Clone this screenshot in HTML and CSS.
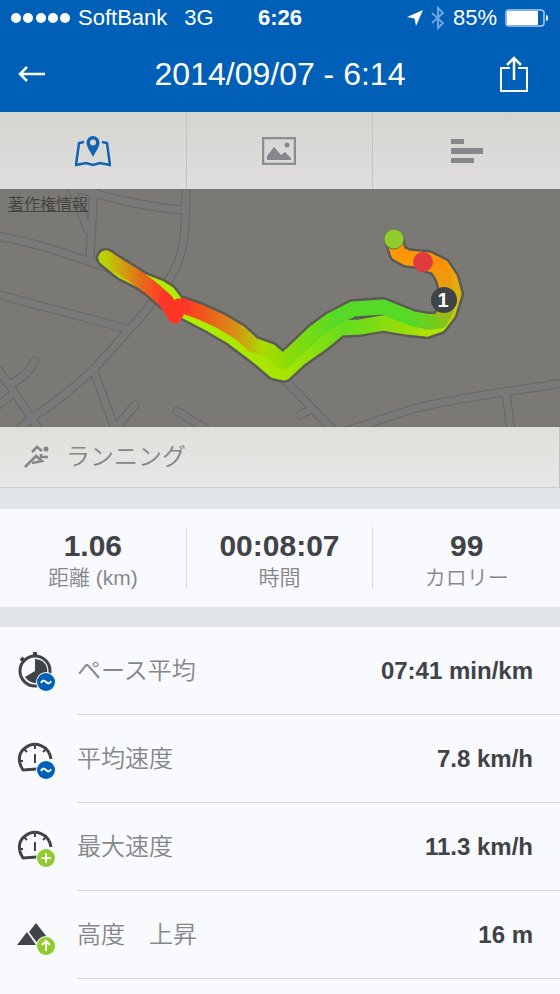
FILE: index.html
```html
<!DOCTYPE html>
<html lang="ja">
  <head>
    <meta charset="UTF-8" />
    <meta name="viewport" content="width=device-width, initial-scale=1.0" />
    <title>2014/09/07 - 6:14</title>
    <link rel="stylesheet" href="styles.css">
  </head>
  <body>
    <header class="header">
      <div class="status-bar">
        <div class="carrier">
          <svg width="60" height="12" viewBox="0 0 60 12" fill="#fff">
            <circle cx="5" cy="6" r="5" />
            <circle cx="17" cy="6" r="5" />
            <circle cx="30" cy="6" r="5" />
            <circle cx="42" cy="6" r="5" />
            <circle cx="54" cy="6" r="5" />
          </svg>
          <span>SoftBank</span>
          <span class="network">3G</span>
        </div>
        <time class="clock">6:26</time>
        <div class="power">
          <svg width="16" height="16" viewBox="0 0 16 16" fill="#fff">
            <path d="M16 0L9 16L7.500 8.500L0 7Z" />
          </svg>
          <svg width="14" height="24" viewBox="0 0 14 24" fill="none" stroke="#6fa5dc" stroke-width="2">
            <path d="M1 7L12 17L7 22V2L12 7L1 17" />
          </svg>
          <span>85%</span>
          <svg width="44" height="18" viewBox="0 0 44 18">
            <rect x="1" y="1" width="38" height="16" rx="3" fill="none" stroke="#a9cdf0" stroke-width="1.500" />
            <rect x="2" y="2" width="31" height="14" rx="1" fill="#fff" />
            <path d="M41 6Q43 6 43 9Q43 12 41 12Z" fill="#fff" />
          </svg>
        </div>
      </div>
      <div class="nav-bar">
        <button class="back-button" aria-label="戻る">
          <svg width="28" height="18" viewBox="0 0 28 18" fill="none" stroke="#fff" stroke-width="2.500">
            <path d="M27 9H2M9 2L2 9L9 16" />
          </svg>
        </button>
        <h1>2014/09/07 - 6:14</h1>
        <button class="share-button" aria-label="共有">
          <svg width="28" height="36" viewBox="0 0 28 36" fill="none" stroke="#fff" stroke-width="2">
            <path d="M10 12H1V35H27V12H18" />
            <path d="M14 24V2M7 9L14 2L21 9" stroke-width="2.500" />
          </svg>
        </button>
      </div>
    </header>

    <nav class="tabs">
      <button class="tab" aria-label="地図">
        <svg width="36" height="32" viewBox="0 0 36 32">
          <path d="M9 7L4 8L1 30L11 28L18 30L25 28L35 30L32 8L27 7" fill="none" stroke="#1162b5" stroke-width="2.500" />
          <path d="M18 1A6.500 6.500 0 0 0 11.500 7.500C11.500 12 15 16 18 22C21 16 24.500 12 24.500 7.500A6.500 6.500 0 0 0 18 1ZM18 4.500A3 3 0 1 1 18 10.500A3 3 0 1 1 18 4.500Z" fill="#1162b5" fill-rule="evenodd" />
        </svg>
      </button>
      <button class="tab" aria-label="写真">
        <svg width="34" height="28" viewBox="0 0 34 28">
          <rect x="1" y="1" width="32" height="26" fill="none" stroke="#8b8d90" stroke-width="2.500" />
          <path d="M5 23V19L12 10L19 18L23 15L29 21V23Z" fill="#85878a" />
          <circle cx="25" cy="8" r="2.500" fill="#85878a" />
        </svg>
      </button>
      <button class="tab" aria-label="詳細">
        <svg width="34" height="28" viewBox="0 0 34 28" fill="#85878a">
          <rect x="1" y="2" width="13" height="5" />
          <rect x="1" y="11" width="32" height="6" />
          <rect x="1" y="21" width="23" height="5" />
        </svg>
      </button>
    </nav>

    <section class="map">
      <svg class="map-canvas" viewBox="0 0 560 238">
        <defs>
          <g id="roads">
            <path d="M-4 47C35 53 70 66 108 79L172 112" />
            <path d="M94 -4L90 70" />
            <path d="M70 -6L88 41" />
            <path d="M66 -4C105 8 140 17 183 21" />
            <path d="M186 -4C186 40 184 58 178 73C170 94 150 118 128 142L94 180C70 202 50 218 32 228L18 242" />
            <path d="M-4 105L128 140" />
            <path d="M94 182L115 240L135 216" />
            <path d="M-4 178L12 200L40 242" />
            <path d="M35 172Q27 188 10 195" />
            <path d="M13 205L-4 218" />
            <path d="M177 222L206 240" />
            <path d="M282 188L334 242" />
            <path d="M300 226L311 220" />
            <path d="M340 244L400 224C440 211 500 204 564 194" />
            <path d="M506 204L511 242" />
          </g>
          <path id="trail-back" d="M106 69L122 82L142 92L160 99L168 104L178 117L187 123L210 135L232 148L256 166L275 182L284 184L300 169L323 153L340 139L360 138L383 134L407 138L427 140" />
          <path id="trail-out" d="M183 117L200 123L220 132L240 144L253 156L270 162L283 173L295 162L315 143L330 132L353 120L383 118L413 130L430 133" />
          <path id="trail-west" d="M106 69L120 78L133 86L150 98L166 112" />
          <path id="trail-loop" d="M394 50L398 64L407 69L428 71L442 78L450 90L454 105L448 124L439 136L427 140" />
          <path id="trail-inner" d="M423 73L437 77L444 88L448 103L446 122L440 132L427 133" />
          <path id="trail-tip" d="M166 112L175 127L179 117L183 117" />
          <linearGradient id="back" gradientUnits="userSpaceOnUse" x1="106" y1="0" x2="440" y2="0">
            <stop offset="0" stop-color="#bdd400" />
            <stop offset="0.200" stop-color="#b0ee00" />
            <stop offset="0.540" stop-color="#a6e400" />
            <stop offset="0.720" stop-color="#65dc1e" />
            <stop offset="0.860" stop-color="#91dc0c" />
            <stop offset="1" stop-color="#b2e000" />
          </linearGradient>
          <linearGradient id="out" gradientUnits="userSpaceOnUse" x1="183" y1="0" x2="440" y2="0">
            <stop offset="0" stop-color="#ff3a26" />
            <stop offset="0.080" stop-color="#f0561c" />
            <stop offset="0.200" stop-color="#d98e16" />
            <stop offset="0.310" stop-color="#a8dc00" />
            <stop offset="0.420" stop-color="#88dc08" />
            <stop offset="0.600" stop-color="#55da28" />
            <stop offset="0.880" stop-color="#55da28" />
            <stop offset="1" stop-color="#7ac71c" />
          </linearGradient>
          <linearGradient id="west" gradientUnits="userSpaceOnUse" x1="104" y1="0" x2="166" y2="0">
            <stop offset="0" stop-color="#b7d400" />
            <stop offset="0.300" stop-color="#d0a010" />
            <stop offset="0.600" stop-color="#e86c18" />
            <stop offset="1" stop-color="#ff3426" />
          </linearGradient>
          <linearGradient id="loop" gradientUnits="userSpaceOnUse" x1="0" y1="50" x2="0" y2="142">
            <stop offset="0" stop-color="#ff9204" />
            <stop offset="0.300" stop-color="#fa9a06" />
            <stop offset="0.600" stop-color="#d6b60c" />
            <stop offset="1" stop-color="#b2e000" />
          </linearGradient>
          <linearGradient id="inner" gradientUnits="userSpaceOnUse" x1="0" y1="73" x2="0" y2="136">
            <stop offset="0" stop-color="#ff8e06" />
            <stop offset="0.500" stop-color="#dda510" />
            <stop offset="1" stop-color="#7ac71c" />
          </linearGradient>
        </defs>
        <rect width="560" height="238" fill="#7b7975" />
        <g fill="none" stroke-linecap="round" stroke-linejoin="round">
          <use href="#roads" stroke="#686662" stroke-width="9" />
          <use href="#roads" stroke="#79797a" stroke-width="7" />
          <g stroke="#5b5a55" stroke-width="20">
            <use href="#trail-back" />
            <use href="#trail-out" />
            <use href="#trail-west" />
            <use href="#trail-loop" />
            <use href="#trail-inner" />
          </g>
          <g stroke-width="15">
            <use href="#trail-back" stroke="url(#back)" />
            <use href="#trail-loop" stroke="url(#loop)" />
            <use href="#trail-inner" stroke="url(#inner)" />
            <use href="#trail-out" stroke="url(#out)" />
            <use href="#trail-west" stroke="url(#west)" />
            <use href="#trail-tip" stroke="#ff3626" />
          </g>
        </g>
        <circle cx="394" cy="50" r="10" fill="#8fcc2c" stroke="#6b7a4a" />
        <circle cx="423" cy="73" r="10" fill="#e03c40" />
        <circle cx="444" cy="111" r="13" fill="#404347" />
        <text class="marker-label" x="443" y="118">1</text>
      </svg>
      <a class="map-legal" href="#">著作権情報</a>
    </section>

    <section class="sport">
      <svg width="26" height="24" viewBox="0 0 26 24" fill="none" stroke="#858688" stroke-width="2.500">
        <path d="M8 7L13 2L18 6" />
        <path d="M24 12H17V9" />
        <path d="M1 22L12 11L18 16L8 18" />
        <circle cx="22" cy="4" r="2.500" fill="#858688" stroke="none" />
      </svg>
      <h2>ランニング</h2>
    </section>

    <section class="stats">
      <div class="stat">
        <strong>1.06</strong>
        <span>距離 (km)</span>
      </div>
      <div class="stat">
        <strong>00:08:07</strong>
        <span>時間</span>
      </div>
      <div class="stat">
        <strong>99</strong>
        <span>カロリー</span>
      </div>
    </section>

    <ul class="details">
      <li class="detail">
        <svg width="40" height="40" viewBox="0 0 40 40">
          <circle cx="18" cy="20" r="15" fill="none" stroke="#404347" stroke-width="3" />
          <path d="M18 20V8A12 12 0 1 1 8 26Z" fill="#404347" />
          <path d="M18 1V5M4 7L7 10" stroke="#404347" stroke-width="4" />
          <circle cx="29" cy="31" r="10" fill="#f9fafd" />
          <circle cx="29" cy="31" r="9" fill="#005fb6" />
          <path d="M24 32C26 28 28 30 29 31C31 33 33 33 34 30" fill="none" stroke="#fff" stroke-width="2" />
        </svg>
        <div class="detail-row">
          <span class="label">ペース平均</span>
          <span class="value">07:41 min/km</span>
        </div>
      </li>
      <li class="detail">
        <svg width="40" height="40" viewBox="0 0 40 40">
          <path d="M20 30L6 31C0 22 2 13 8 9C18 1 32 7 34 20" fill="none" stroke="#404347" stroke-width="3" />
          <path d="M18 6V10M7 10L10 13M29 10L26 13M3 22H6M18 15V24" stroke="#404347" stroke-width="2" />
          <circle cx="29" cy="31" r="10" fill="#f9fafd" />
          <circle cx="29" cy="31" r="9" fill="#005fb6" />
          <path d="M24 32C26 28 28 30 29 31C31 33 33 33 34 30" fill="none" stroke="#fff" stroke-width="2" />
        </svg>
        <div class="detail-row">
          <span class="label">平均速度</span>
          <span class="value">7.8 km/h</span>
        </div>
      </li>
      <li class="detail">
        <svg width="40" height="40" viewBox="0 0 40 40">
          <path d="M20 30L6 31C0 22 2 13 8 9C18 1 32 7 34 20" fill="none" stroke="#404347" stroke-width="3" />
          <path d="M18 6V10M7 10L10 13M29 10L26 13M3 22H6M18 15V24" stroke="#404347" stroke-width="2" />
          <circle cx="29" cy="31" r="10" fill="#f9fafd" />
          <circle cx="29" cy="31" r="9" fill="#8fcc2c" />
          <path d="M29 26V36M24 31H34" stroke="#fff" stroke-width="2" />
        </svg>
        <div class="detail-row">
          <span class="label">最大速度</span>
          <span class="value">11.3 km/h</span>
        </div>
      </li>
      <li class="detail">
        <svg width="40" height="40" viewBox="0 0 40 40">
          <path d="M0 30L10 17L19 30Z" fill="#404347" />
          <path d="M12 17L19 8L30 22L21 29Z" fill="#404347" />
          <circle cx="29" cy="31" r="10" fill="#f9fafd" />
          <circle cx="29" cy="31" r="9" fill="#8fcc2c" />
          <path d="M29 36V27M25 30L29 26L33 30" fill="none" stroke="#fff" stroke-width="2" />
        </svg>
        <div class="detail-row">
          <span class="label">高度　上昇</span>
          <span class="value">16 m</span>
        </div>
      </li>
    </ul>
  </body>
</html>
```
FILE: styles.css
```css
* {
  box-sizing: border-box;
}
body {
  font-family: "Liberation Sans", "Noto Sans CJK JP", sans-serif;
  margin: 0;
  min-height: 100vh;
  background-color: #f9fafd;
  color: #404347;
}
button {
  border: none;
  padding: 0;
  background: none;
  cursor: pointer;
}
svg {
  display: block;
  flex: none;
}
h1,
h2 {
  margin: 0;
  font-weight: 350;
}
.header {
  background-color: #005fb6;
  color: white;
}
.status-bar {
  display: grid;
  grid-template-columns: 1fr auto 1fr;
  align-items: center;
  height: 36px;
  padding: 0 11px;
  font-size: 22px;
  line-height: 36px;
}
.carrier,
.power {
  display: flex;
  align-items: center;
  gap: 7px;
}
.network {
  margin-left: 10px;
}
.clock {
  font-weight: bold;
}
.power {
  justify-content: flex-end;
  gap: 8px;
}
.nav-bar {
  display: grid;
  grid-template-columns: 1fr auto 1fr;
  align-items: center;
  height: 76px;
}
.nav-bar h1 {
  font-size: 32px;
  line-height: 40px;
}
.back-button {
  justify-self: start;
  margin-left: 18px;
}
.share-button {
  justify-self: end;
  margin-right: 32px;
}
.tabs {
  display: grid;
  grid-template-columns: repeat(3, 1fr);
  height: 77px;
  background: linear-gradient(#d4d4d1, #dfdedc);
}
.tab {
  display: flex;
  align-items: center;
  justify-content: center;
}
.tab:not(:last-child) {
  border-right: 1px solid #c3c3c1;
}
.map {
  position: relative;
}
.map-canvas {
  width: 100%;
  height: auto;
}
.marker-label {
  fill: white;
  font-size: 20px;
  font-weight: bold;
  text-anchor: middle;
}
.map-legal {
  position: absolute;
  top: 4px;
  left: 8px;
  color: #464542;
  font-size: 16px;
  line-height: 24px;
}
.sport {
  display: flex;
  align-items: center;
  gap: 16px;
  height: 61px;
  padding-left: 24px;
  border-right: 1px solid #c3c4c2;
  border-bottom: 1px solid #cdcfce;
  background: linear-gradient(#dfdfdb, #e7e7e6);
}
.sport h2 {
  color: #858688;
  font-size: 24px;
  line-height: 36px;
}
.stats {
  display: grid;
  grid-template-columns: repeat(3, 1fr);
  padding: 18px 0;
  border-top: 21px solid #e1e5e9;
  border-bottom: 20px solid #e1e5e9;
}
.stat {
  display: flex;
  flex-direction: column;
  align-items: center;
  height: 62px;
}
.stat:not(:last-child) {
  border-right: 1px solid #d9dbde;
}
.stat strong {
  font-size: 30px;
  line-height: 38px;
}
.stat span {
  color: #85878a;
  font-size: 21px;
  font-weight: 350;
  line-height: 26px;
}
.details {
  margin: 0;
  padding: 0;
  list-style: none;
}
.detail {
  display: flex;
  align-items: center;
  gap: 20px;
  padding-left: 17px;
}
.detail-row {
  display: flex;
  flex: 1;
  align-items: center;
  justify-content: space-between;
  height: 88px;
  padding-right: 27px;
  border-bottom: 1px solid #d9dbde;
  font-size: 24px;
  line-height: 36px;
}
.label {
  color: #85878a;
  font-weight: 350;
}
.value {
  font-weight: bold;
}
```
